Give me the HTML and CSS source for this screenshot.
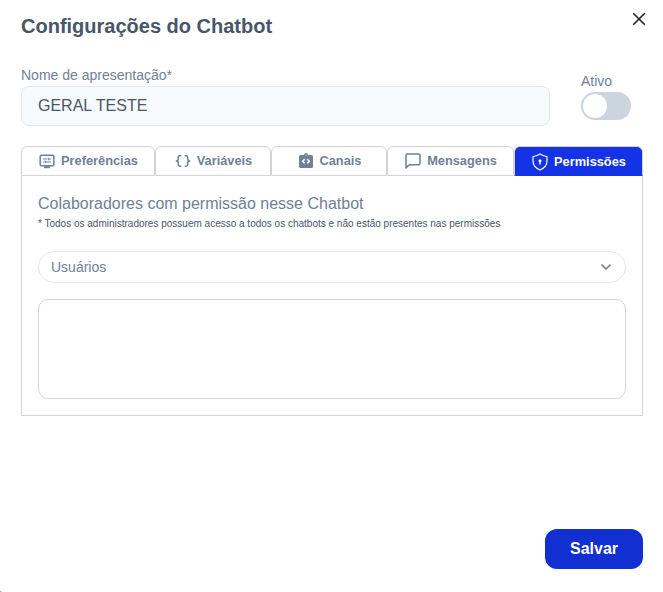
FILE: index.html
```
<!DOCTYPE html>
<html lang="pt-BR">
<head>
  <meta charset="UTF-8" />
  <title>Configurações do Chatbot</title>
  <link rel="stylesheet" href="styles.css">
</head>
<body>

  <div class="modal">
    <header class="modal-header">
      <h2>Configurações do Chatbot</h2>
      <button type="button" class="close" aria-label="Fechar">
        <svg width="14" height="14" viewBox="0 0 14 14" fill="none" stroke="#1a202c" stroke-width="1.6"><path d="M1.2 1.2l11.6 11.6M12.8 1.2L1.2 12.8"/></svg>
      </button>
    </header>

    <!-- Name and active switch -->
    <div class="form-row">
      <div class="field">
        <label for="name">Nome de apresentação*</label>
        <input type="text" id="name" value="GERAL TESTE" />
      </div>
      <div class="active">
        <span class="active-label">Ativo</span>
        <button type="button" class="switch" role="switch" aria-checked="false" aria-label="Ativo"><span class="knob"></span></button>
      </div>
    </div>

    <!-- Tabs -->
    <div class="tabs" role="tablist">
      <button type="button" class="tab" role="tab">
        <svg width="16" height="16" viewBox="0 0 16 16" fill="none" stroke="currentColor" stroke-width="1.5"><rect x="1.2" y="2.2" width="13.6" height="10.600" rx="1"/><path d="M5 14.200h6" stroke-width="2"/><path d="M4 6h4.500M10.200 6H12M9.700 4.700v2.600M4 9h1.500M7 9h5M6.500 7.700v2.600" stroke-width="1"/></svg>
        <span>Preferências</span>
      </button>
      <button type="button" class="tab" role="tab">
        <svg width="16" height="16" viewBox="0 0 16 16" fill="none" stroke="currentColor" stroke-width="1.5"><path d="M6.200 2.700H5Q3.300 2.700 3.300 4.400v1.900Q3.300 8 .8 8q2.500 0 2.500 1.700v1.900q0 1.700 1.700 1.700h1.200M9.800 2.700H11q1.700 0 1.700 1.700v1.900Q12.700 8 15.200 8q-2.500 0-2.500 1.700v1.900q0 1.700-1.700 1.700H9.800"/></svg>
        <span>Variáveis</span>
      </button>
      <button type="button" class="tab" role="tab">
        <svg width="16" height="16" viewBox="0 0 16 16"><path d="M2.500 2H6a2 2 0 0 1 4 0h3.500A1.500 1.500 0 0 1 15 3.500v10a1.500 1.500 0 0 1-1.500 1.500h-11A1.500 1.500 0 0 1 1 13.500v-10A1.500 1.500 0 0 1 2.500 2z" fill="currentColor"/><circle cx="8" cy="2" r=".6" fill="#fff"/><path d="M6.700 6.300L4.700 8.300l2 2M9.300 6.300l2 2-2 2" fill="none" stroke="#fff" stroke-width="1.500"/></svg>
        <span>Canais</span>
      </button>
      <button type="button" class="tab" role="tab">
        <svg width="16" height="16" viewBox="0 0 16 16" fill="none" stroke="currentColor" stroke-width="1.500" stroke-linejoin="round"><path d="M2.200 1h11.600Q15 1 15 2.200v8.300q0 1.200-1.200 1.200H4.200L1 14.900V2.200Q1 1 2.200 1z"/></svg>
        <span>Mensagens</span>
      </button>
      <button type="button" class="tab selected" role="tab" aria-selected="true">
        <svg width="16" height="18" viewBox="0 0 16 18" fill="none" stroke="currentColor" stroke-width="1.200" stroke-linejoin="round"><path d="M8 1Q11.500 3.200 15 3.500V8q0 6-7 9Q1 14 1 8V3.500Q4.500 3.200 8 1z"/><circle cx="8" cy="7.800" r="1.500" fill="currentColor" stroke="none"/><path d="M8 8v3.500" stroke-width="1.500"/></svg>
        <span>Permissões</span>
      </button>
    </div>

    <div class="panel" role="tabpanel">
      <p class="panel-title">Colaboradores com permissão nesse Chatbot</p>
      <p class="hint">* Todos os administradores possuem acesso a todos os chatbots e não estão presentes nas permissões</p>
      <button type="button" class="select">
        Usuários
        <svg width="12" height="8" viewBox="0 0 12 8" fill="none" stroke="currentColor" stroke-width="1.600"><path d="M1.500 1.700L6 6l4.500-4.300"/></svg>
      </button>
      <div class="user-list"></div>
    </div>

    <footer class="modal-footer">
      <button type="button" class="save">Salvar</button>
    </footer>
  </div>

</body>
</html>
```
FILE: styles.css
```
* {
  box-sizing: border-box;
}
body {
  margin: 0;
  background: #777;
  font-family: "Liberation Sans", Arial, sans-serif;
  color: #718096;
}
button, input {
  font-family: inherit;
  color: inherit;
}
.modal {
  display: flex;
  flex-direction: column;
  height: 592px;
  padding: 11px 20px 23px 21px;
  background: #fff;
  border-bottom-left-radius: 2px;
}
.modal-header {
  display: flex;
  justify-content: space-between;
  align-items: flex-start;
  height: 56px;
}
h2 {
  margin: 0;
  font-size: 20px;
  line-height: 30px;
  color: #4a5568;
}
.close {
  display: flex;
  margin-right: -4px;
  padding: 1px;
  border: 0;
  background: none;
}
.form-row {
  display: flex;
  justify-content: space-between;
  height: 79px;
  padding-right: 12px;
}
.field {
  width: 529px;
}
.field label {
  display: block;
  font-size: 14px;
  line-height: 16px;
  margin-bottom: 3px;
}
.field input {
  display: block;
  width: 100%;
  height: 40px;
  padding: 0 16px;
  border: 1px solid #e2e8f0;
  border-radius: 8px;
  background: #f7fafc;
  color: #4a5568;
  font-size: 16px;
}
.active {
  width: 50px;
  padding-top: 6px;
}
.active-label {
  display: block;
  font-size: 14px;
  line-height: 16px;
  margin-bottom: 3px;
}
.switch {
  display: block;
  width: 50px;
  height: 28px;
  padding: 2px;
  border: 0;
  border-radius: 14px;
  background: #cbd5e0;
}
.knob {
  display: block;
  width: 24px;
  height: 24px;
  border-radius: 50%;
  background: #fff;
}
.tabs {
  display: grid;
  grid-template-columns: 134px 116px 116px 127px 129px;
  height: 30px;
}
.tab {
  display: flex;
  justify-content: center;
  align-items: center;
  gap: 6px;
  padding: 0 0 0 1px;
  border: 1px solid #d3d3d3;
  border-radius: 6px 6px 0 0;
  background: #fff;
  font-size: 12.8px;
  font-weight: bold;
}
.tab span {
  padding-bottom: 2px;
}
.tab.selected {
  padding-top: 2px;
  border-bottom-color: #1432e6;
  background: #1432e6;
  color: #fff;
}
.panel {
  width: 622px;
  height: 240px;
  padding: 16px;
  border: 1px solid #d3d3d3;
  border-top: 0;
}
.panel p {
  margin: 0;
}
.panel-title {
  font-size: 16px;
  line-height: 24px;
}
.panel .hint {
  margin-bottom: 20px;
  font-size: 10px;
  line-height: 15px;
  color: #4a5568;
}
.select {
  display: flex;
  justify-content: space-between;
  align-items: center;
  width: 100%;
  height: 32px;
  padding: 0 13px 0 12px;
  border: 1px solid #e2e8f0;
  border-radius: 16px;
  background: #fff;
  font-size: 14px;
}
.user-list {
  height: 100px;
  margin-top: 16px;
  border: 1px solid #d3d3d3;
  border-radius: 10px;
}
.modal-footer {
  display: flex;
  justify-content: flex-end;
  margin-top: auto;
}
.save {
  width: 98px;
  height: 40px;
  padding: 0;
  border: 0;
  border-radius: 12px;
  background: #1230d2;
  color: #fff;
  font-size: 16px;
  font-weight: bold;
}
```
